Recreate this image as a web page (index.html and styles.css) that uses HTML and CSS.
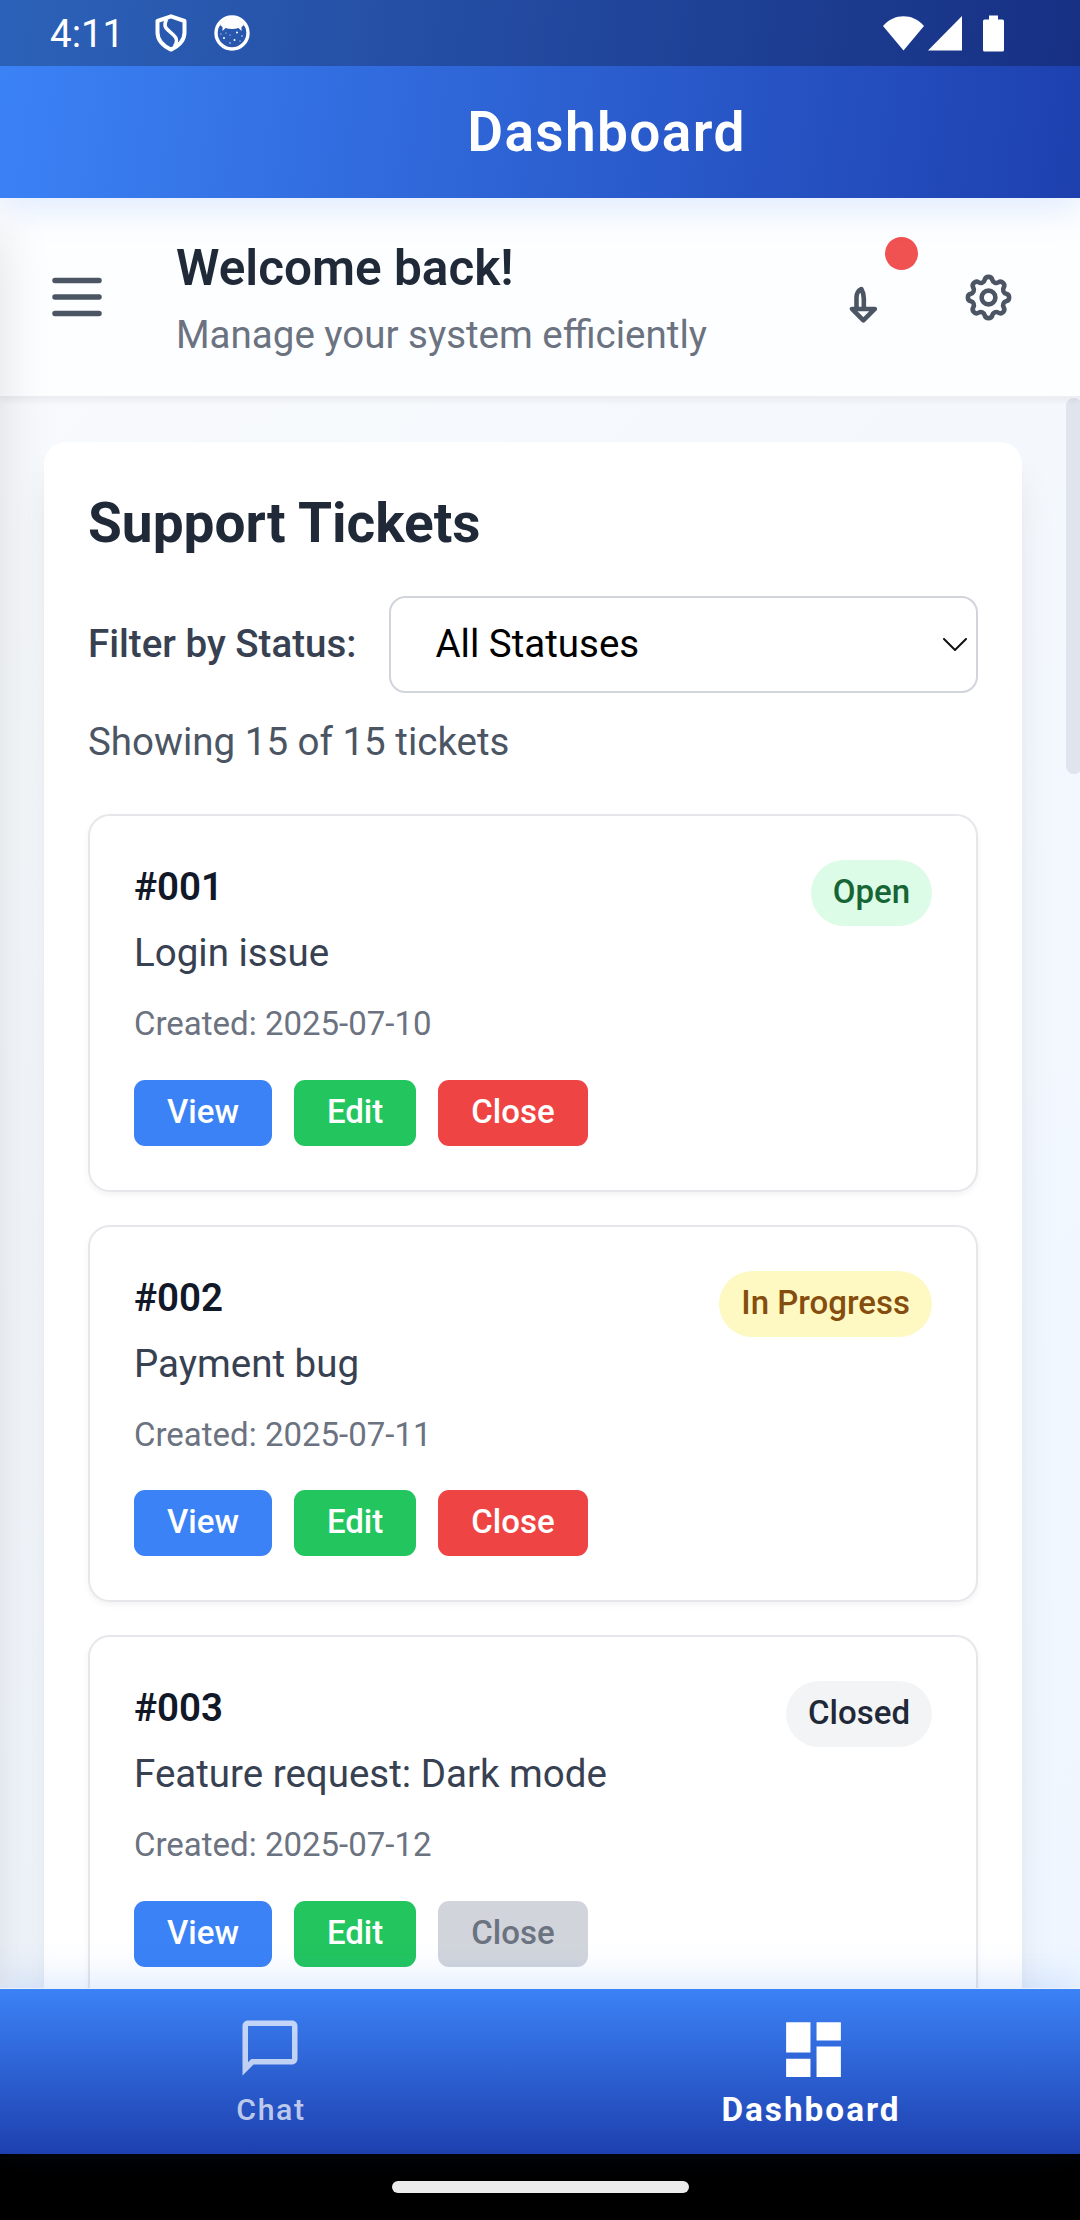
FILE: index.html
```html
<!DOCTYPE html>
<html lang="en">
<head>
<meta charset="utf-8">
<title>Dashboard</title>
<link rel="stylesheet" href="styles.css">
</head>
<body>
<div class="phone">
  <div class="top">
    <div class="statusbar">
      <span class="clock">4:11</span>
      <svg class="sb-shield" viewBox="0 0 32 38" fill="none" stroke="#fff" stroke-width="4" stroke-linejoin="round"><path d="M16 2.300 29.500 7v11.500C29.500 26 24 31.800 16 35.600 8 31.800 2.500 26 2.500 18.500V7z"/><path stroke-width="3.600" d="M11.500 5c-2.500 6-2 8.500 2 11.500l5 4.500c4 3.500 4 6.500 1 11.500"/></svg>
      <svg class="sb-cat" viewBox="0 0 36 36"><circle cx="18" cy="18" r="16" fill="none" stroke="#fff" stroke-width="3.400"/><path fill="#fff" d="M6 10C11 1 25 1 30 10l-2.500 2 0 4-3-3c-4 1.200-9 1.200-13 0l-3 3V12z"/><g fill="#fff"><circle cx="10" cy="23" r="1"/><circle cx="23" cy="17.500" r="1"/><circle cx="20.500" cy="25" r="1"/><circle cx="16" cy="28" r=".7"/><circle cx="28" cy="21" r=".7"/><circle cx="16" cy="20" r=".6"/><circle cx="26" cy="26" r=".6"/><circle cx="7" cy="19" r=".6"/><circle cx="12" cy="18" r=".6"/></g></svg>
      <svg class="sb-system" viewBox="0 0 121 37" fill="#fff"><path d="M0 11C11-2 30-2 41 11L20.500 35.500z"/><path d="M79 1v34.500H45z"/><path d="M106 .500h9V4.500h4.500q1.500 0 1.500 1.500v29q0 1.500-1.500 1.500h-18q-1.500 0-1.500-1.500V6q0-1.500 1.500-1.500h4.500z"/></svg>
    </div>
    <header class="titlebar"><h1>Dashboard</h1></header>
  </div>

  <main class="content">
    <div class="welcome">
      <svg class="menu" viewBox="0 0 24 24" fill="none" stroke="currentColor" stroke-width="2" stroke-linecap="round"><path d="M4 6h16M4 12h16M4 18h16"/></svg>
      <div class="greeting">
        <h2>Welcome back!</h2>
        <p>Manage your system efficiently</p>
      </div>
      <div class="bell">
        <svg class="icon" viewBox="0 0 24 24" fill="none" stroke="currentColor" stroke-width="2" stroke-linecap="round" stroke-linejoin="round"><path d="M15 17h5l-5 5-5-5h5zM15.200 17v-4.500c0-1.700-.4-3-1.100-4.200-1.100.6-2.100 1.900-2.100 3.600V17"/></svg>
        <span class="dot"></span>
      </div>
      <svg class="icon gear" viewBox="0 0 24 24" fill="none" stroke="currentColor" stroke-width="2" stroke-linecap="round" stroke-linejoin="round"><path d="M10.325 4.317c.426-1.756 2.924-1.756 3.350 0a1.724 1.724 0 002.573 1.066c1.543-.94 3.310.826 2.370 2.370a1.724 1.724 0 001.065 2.572c1.756.426 1.756 2.924 0 3.350a1.724 1.724 0 00-1.066 2.573c.94 1.543-.826 3.310-2.370 2.370a1.724 1.724 0 00-2.572 1.065c-.426 1.756-2.924 1.756-3.350 0a1.724 1.724 0 00-2.573-1.066c-1.543.94-3.310-.826-2.370-2.370a1.724 1.724 0 00-1.065-2.572c-1.756-.426-1.756-2.924 0-3.350a1.724 1.724 0 001.066-2.573c-.94-1.543.826-3.310 2.370-2.370.996.608 2.296.07 2.572-1.065z"/><circle cx="12" cy="12" r="3"/></svg>
    </div>

    <div class="scroller">
      <section class="panel">
        <h2 class="panel-title">Support Tickets</h2>
        <div class="filter">
          <label>Filter by Status:</label>
          <div class="select"><span>All Statuses</span><svg viewBox="0 0 24 13" fill="none" stroke="#111" stroke-width="2" stroke-linecap="round"><path d="M1 1 12 12 23 1"/></svg></div>
        </div>
        <p class="count">Showing 15 of 15 tickets</p>

        <div class="tickets">
          <article class="ticket">
            <div class="row">
              <div><h3>#001</h3><p class="subject">Login issue</p></div>
              <span class="badge open">Open</span>
            </div>
            <p class="created">Created: 2025-07-10</p>
            <div class="actions"><button class="view">View</button><button class="edit">Edit</button><button class="close">Close</button></div>
          </article>
          <article class="ticket">
            <div class="row">
              <div><h3>#002</h3><p class="subject">Payment bug</p></div>
              <span class="badge progress">In Progress</span>
            </div>
            <p class="created">Created: 2025-07-11</p>
            <div class="actions"><button class="view">View</button><button class="edit">Edit</button><button class="close">Close</button></div>
          </article>
          <article class="ticket">
            <div class="row">
              <div><h3>#003</h3><p class="subject">Feature request: Dark mode</p></div>
              <span class="badge closed">Closed</span>
            </div>
            <p class="created">Created: 2025-07-12</p>
            <div class="actions"><button class="view">View</button><button class="edit">Edit</button><button class="disabled">Close</button></div>
          </article>
        </div>
      </section>
      <span class="scrollbar"></span>
    </div>
    <aside class="drawer"></aside>
  </main>

  <nav class="tabs">
    <div class="tab">
      <svg viewBox="0 0 24 24" fill="currentColor"><path d="M20 2H4c-1.100 0-2 .9-2 2v18l4-4h14c1.100 0 2-.9 2-2V4c0-1.100-.9-2-2-2zm0 14H5.170L4 17.170V4h16v12z"/></svg>
      <span>Chat</span>
    </div>
    <div class="tab active">
      <svg viewBox="0 0 24 24" fill="currentColor"><path d="M3 13h8V3H3v10zm0 8h8v-6H3v6zm10 0h8V11h-8v10zm0-18v6h8V3h-8z"/></svg>
      <span>Dashboard</span>
    </div>
  </nav>
  <div class="gesture"><span></span></div>
</div>
</body>
</html>
```

FILE: styles.css
```css
* { box-sizing: border-box; margin: 0; padding: 0; }
body { font-family: Roboto, "Liberation Sans", sans-serif; }
svg { display: block; flex: none; }

.phone { width: 1080px; height: 2220px; display: flex; flex-direction: column; overflow: hidden; }

.top { position: relative; z-index: 3; box-shadow: 0 11px 33px rgba(59, 130, 246, .15); }
.statusbar {
  height: 66px; display: flex; align-items: center; color: #fff; padding-left: 50px;
  background: linear-gradient(rgba(0, 0, 0, .25), rgba(0, 0, 0, .25)), linear-gradient(97deg, #3b82f6, #1e40af);
}
.clock { font-size: 38.5px; width: 105px; padding-top: 1px; }
.sb-shield { width: 32px; height: 38px; }
.sb-cat { width: 36px; height: 36px; margin-left: 27px; }
.sb-system { width: 121px; height: 37px; margin-left: auto; margin-right: 76px; }
.titlebar {
  height: 132px; display: flex; align-items: center; justify-content: center; padding-left: 133px;
  color: #fff; background: linear-gradient(97deg, #3b82f6, #1e40af);
}
.titlebar h1 { font-size: 55px; font-weight: 600; letter-spacing: 1.375px; }

.content {
  position: relative; flex: 1; min-height: 0; overflow: hidden; display: flex; flex-direction: column;
  background: linear-gradient(135deg, #f8fafc, #eff6ff);
}
.welcome {
  position: relative; z-index: 1; height: 200px; flex: none; display: flex; align-items: center;
  padding: 0 64px 0 44px; color: #4b5563; background: #fdfeff; border-bottom: 2px solid #eceef2;
  box-shadow: 0 3px 6px rgba(0, 0, 0, .05);
}
.menu { width: 66px; height: 66px; }
.greeting { flex: 1; margin-left: 66px; }
.greeting h2 { font-size: 49.5px; line-height: 75px; padding-bottom: 2px; font-weight: 600; color: #1f2937; }
.greeting p { font-size: 38.5px; line-height: 53px; padding-bottom: 2px; color: #6b7280; }
.icon { width: 55px; height: 55px; }
.bell { position: relative; margin-right: 77px; }
.dot { position: absolute; right: -34px; top: -33px; width: 33px; height: 33px; border-radius: 50%; background: #f05252; }

.scroller { position: relative; flex: 1; min-height: 0; padding: 44px 58px 0 44px; }
.scrollbar { position: absolute; top: 0; right: -2px; width: 16px; height: 376px; border-radius: 8px; background: #e0e4ec; }
.panel {
  background: #fff; border-radius: 22px; padding: 44px; height: 1900px;
  box-shadow: 0 27px 41px -8px rgba(0, 0, 0, .1), 0 11px 16px -11px rgba(0, 0, 0, .1);
}
.panel-title { font-size: 55px; line-height: 75px; padding-bottom: 2px; font-weight: 700; color: #1f2937; margin-bottom: 33px; }
.filter { display: flex; align-items: center; gap: 33px; color: #374151; font-size: 38.5px; }
.filter label { font-weight: 500; padding-bottom: 2px; }
.select {
  flex: 1; height: 97px; display: flex; align-items: center; justify-content: space-between;
  border: 2px solid #d1d5db; border-radius: 16.5px; padding: 0 9px 0 44px; color: #000;
}
.select span { padding-bottom: 2px; }
.select svg { width: 24px; height: 13px; }
.count { margin: 22px 0 44px; font-size: 38.5px; line-height: 53px; padding-bottom: 2px; color: #4b5563; }

.tickets { display: flex; flex-direction: column; gap: 33px; }
.ticket {
  border: 2px solid #e5e7eb; border-radius: 22px; padding: 44px; background: #fff;
  box-shadow: 0 3px 6px rgba(0, 0, 0, .05);
}
.row { display: flex; justify-content: space-between; align-items: flex-start; }
.ticket h3 { font-size: 38.5px; line-height: 53px; padding-bottom: 2px; font-weight: 600; color: #111827; margin-bottom: 11px; }
.subject { font-size: 38.5px; line-height: 53px; padding-bottom: 2px; color: #374151; }
.badge { font-size: 33px; line-height: 44px; font-weight: 500; padding: 10px 22px 12px; border-radius: 33px; }
.open { background: #dcfce7; color: #166534; }
.progress { background: #fef9c3; color: #854d0e; }
.closed { background: #f3f4f6; color: #1f2937; }
.created { font-size: 33px; line-height: 42px; padding-bottom: 2px; color: #6b7280; margin: 22px 0 32.7px; }
.actions { display: flex; gap: 22px; }
.actions button {
  font: 500 33px/44px Roboto, sans-serif; color: #fff; border: 0; border-radius: 11px; padding: 10px 33px 12px;
}
.view { background: #3b82f6; }
.edit { background: #22c55e; }
.close { background: #ef4444; }
.actions .disabled { background: #d1d5db; color: #6b7280; }

/* off-canvas menu: only its shadow reaches the visible area */
.drawer {
  position: absolute; z-index: 2; top: 0; left: -700px; width: 700px; height: 1900px; background: #fff;
  box-shadow: 0 27px 55px -5px rgba(0, 0, 0, .14);
}

.tabs {
  position: relative; z-index: 3; height: 166px; flex: none; display: flex;
  border-top: 1px solid #eef2fc; background: linear-gradient(#3b82f6, #1e40af);
  box-shadow: 0 -11px 33px rgba(59, 130, 246, .15);
}
.tab { flex: 1; display: flex; flex-direction: column; align-items: center; padding-top: 26px; color: rgba(255, 255, 255, .7); }
.tab svg { width: 66px; height: 66px; }
.tab span { font-size: 30.25px; line-height: 36px; font-weight: 500; letter-spacing: 1.6px; margin-top: 11px; padding-left: 2px; }
.tab.active { color: #fff; padding-top: 24px; }
.tab.active svg { width: 73px; height: 73px; margin-left: 7px; }
.tab.active span { font-size: 33.3px; font-weight: 700; letter-spacing: 2px; margin-top: 6px; }

.gesture { height: 66px; flex: none; background: #000; display: flex; justify-content: center; padding-top: 27px; }
.gesture span { width: 297px; height: 12px; border-radius: 6px; background: #ececec; }
```
